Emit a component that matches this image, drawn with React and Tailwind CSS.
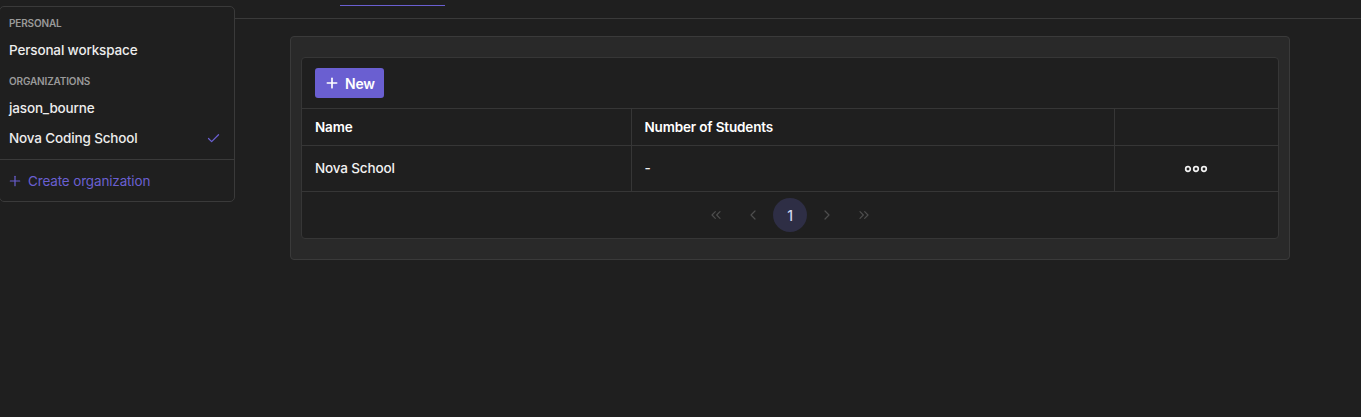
import { Check, Plus, ChevronLeft, ChevronRight, ChevronsLeft, ChevronsRight } from 'lucide-react';

const rows = [{ name: 'Nova School', students: '-' }];

const OrgMenu = () => (
  <div className="absolute left-[-1px] top-[6px] w-[236px] rounded-[5px] border border-[#3a3a3a] bg-[#1f1f1f] pb-[5px]">
    <div className="mt-[9px] flex h-[14px] items-center px-[9px] text-[10px] font-semibold uppercase text-[#9a9a9a]">
      Personal
    </div>
    <div className="mt-[5px] flex h-[30px] items-center px-[9px] text-[13.5px] font-medium tracking-[-0.15px] text-[#ededed]">
      Personal workspace
    </div>
    <div className="mt-[9px] flex h-[14px] items-center px-[9px] text-[10px] font-semibold uppercase text-[#9a9a9a]">
      Organizations
    </div>
    <div className="mt-[6px] flex h-[29px] items-center px-[9px] text-[13.5px] font-medium tracking-[-0.15px] text-[#ededed]">
      jason_bourne
    </div>
    <div className="flex h-[30px] items-center justify-between pl-[9px] pr-[13px] text-[13.5px] font-medium tracking-[-0.15px] text-[#ededed]">
      <span>Nova Coding School</span>
      <Check size={15} strokeWidth={2} className="text-[#6a5fd1]" />
    </div>
    <div className="mt-[6px] h-px bg-[#3a3a3a]" />
    <div className="mt-[6px] flex h-[30px] items-center gap-[5px] pl-[7px] pr-[9px] text-[13.5px] tracking-[-0.15px] text-[#6a5fd1]">
      <Plus size={16} strokeWidth={1.8} />
      <span>Create organization</span>
    </div>
  </div>
);

const Dots = () => (
  <svg width="24" height="8" viewBox="0 0 24 8" fill="none" stroke="#f2f2f2" strokeWidth="1.7">
    <circle cx="4" cy="4" r="2.3" />
    <circle cx="12" cy="4" r="2.3" />
    <circle cx="20" cy="4" r="2.3" />
  </svg>
);

const PageBtn = ({ children, active }) => (
  <div
    className={
      active
        ? 'flex h-[34px] w-[34px] items-center justify-center rounded-full bg-[#2e2e45] text-[14px] font-medium text-[#d0d6ee]'
        : 'flex h-[34px] w-[34px] items-center justify-center text-[#4d4d4d]'
    }
  >
    {children}
  </div>
);

export default function App() {
  return (
    <div className="relative min-h-screen bg-[#1f1f1f] font-['Inter','Liberation_Sans',sans-serif] text-[13.5px] tracking-[-0.15px] text-[#f0f0f0]">
      {/* top tabs bar */}
      <div className="h-[19px] border-b border-[#3a3a3a] pt-[5px]">
        <div className="ml-[340px] h-px w-[105px] bg-[#6a5fd1]" />
      </div>

      <div className="pl-[290px] pt-[17px]">
        <div className="w-[1000px] rounded-[4px] border border-[#3a3a3a] bg-[#292929] px-[10px] py-[20px]">
          <div className="rounded-[4px] border border-[#363636] bg-[#1f1f1f]">
            <div className="px-[13px] pb-[10px] pt-[10px]">
              <button className="flex h-[30px] items-center gap-[5px] rounded-[3px] bg-[#6a5fd1] px-[9px] text-[14px] font-semibold tracking-[-0.2px] text-white">
                <Plus size={16} strokeWidth={2.5} />
                New
              </button>
            </div>

            <table className="w-full border-collapse text-left">
              <thead>
                <tr className="h-[37px] border-y border-[#363636]">
                  <th className="w-[329px] border-r border-[#363636] px-[13px] font-semibold text-white">Name</th>
                  <th className="w-[483px] border-r border-[#363636] px-[13px] font-semibold text-white">Number of Students</th>
                  <th className="px-[13px]" />
                </tr>
              </thead>
              <tbody>
                {rows.map((r) => (
                  <tr key={r.name} className="h-[46px] border-b border-[#363636]">
                    <td className="border-r border-[#363636] px-[13px] font-medium text-[#f2f2f2]">{r.name}</td>
                    <td className="border-r border-[#363636] px-[13px] font-medium text-[#f2f2f2]">{r.students}</td>
                    <td className="px-[13px]">
                      <div className="flex justify-center">
                        <Dots />
                      </div>
                    </td>
                  </tr>
                ))}
              </tbody>
            </table>

            <div className="flex h-[46px] items-center justify-center gap-[3px]">
              <PageBtn><ChevronsLeft size={16} strokeWidth={1.8} /></PageBtn>
              <PageBtn><ChevronLeft size={16} strokeWidth={1.8} /></PageBtn>
              <PageBtn active>1</PageBtn>
              <PageBtn><ChevronRight size={16} strokeWidth={1.8} /></PageBtn>
              <PageBtn><ChevronsRight size={16} strokeWidth={1.8} /></PageBtn>
            </div>
          </div>
        </div>
      </div>

      <OrgMenu />
    </div>
  );
}
